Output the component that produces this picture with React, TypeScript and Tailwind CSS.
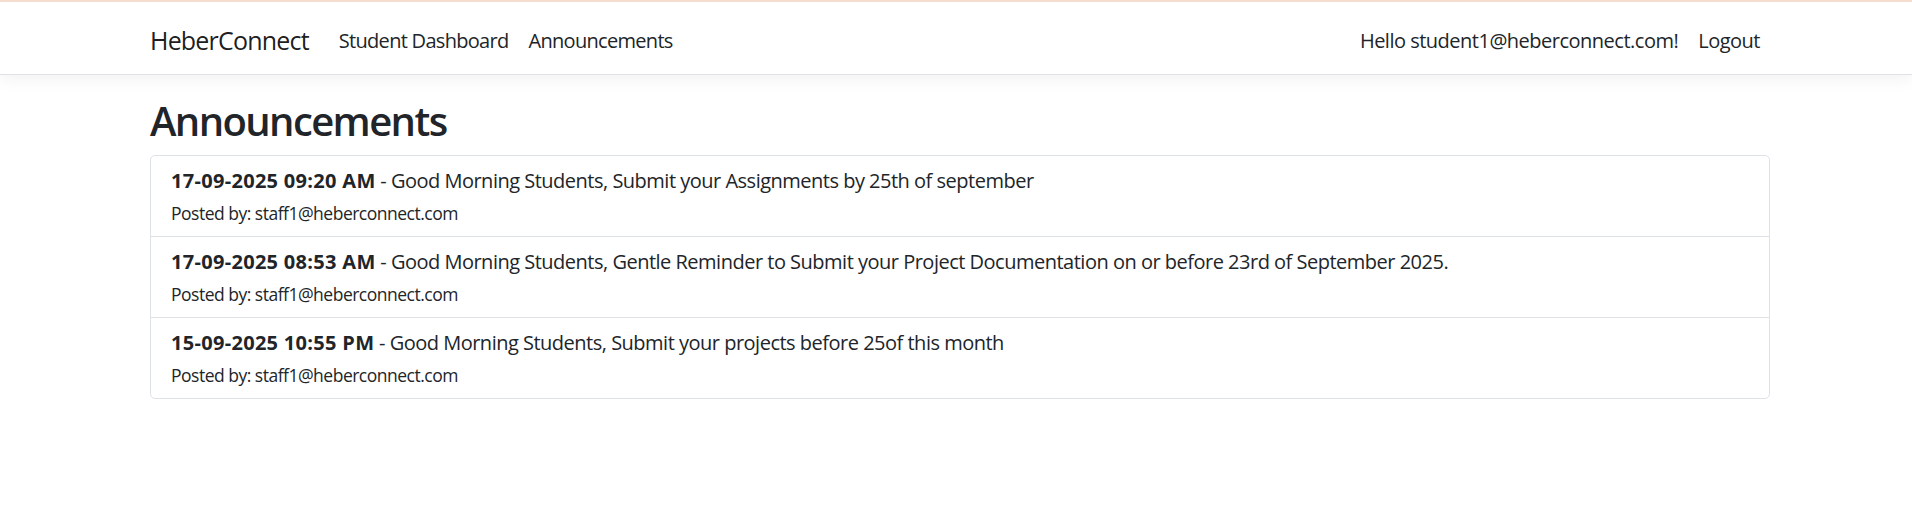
const announcements = [
  {
    date: "17-09-2025 09:20 AM",
    text: "Good Morning Students, Submit your Assignments by 25th of september",
    by: "staff1@heberconnect.com",
  },
  {
    date: "17-09-2025 08:53 AM",
    text: "Good Morning Students, Gentle Reminder to Submit your Project Documentation on or before 23rd of September 2025.",
    by: "staff1@heberconnect.com",
  },
  {
    date: "15-09-2025 10:55 PM",
    text: "Good Morning Students, Submit your projects before 25of this month",
    by: "staff1@heberconnect.com",
  },
];

export default function App() {
  return (
    <div className="min-h-[525px] bg-white text-[#212529] font-['Segoe_UI','Open_Sans',sans-serif] text-[20px] leading-[1.5] tracking-[-0.5px]">
      <header className="border-t-2 border-t-[#f6dccf] border-b border-b-[#dee2e6] bg-white shadow-[0_5px_15px_rgba(0,0,0,0.05)]">
        <nav className="ml-[150px] w-[1620px] h-[72px] pt-[5px] flex items-center">
          <a className="text-[25px] mr-[20px] tracking-[-0.8px] text-[rgba(0,0,0,0.9)]">HeberConnect</a>
          <ul className="flex tracking-[-0.7px]">
            <li className="px-[10px]">Student Dashboard</li>
            <li className="px-[10px]">Announcements</li>
          </ul>
          <ul className="flex ml-auto tracking-[-0.5px]">
            <li className="px-[10px]">Hello student1@heberconnect.com!</li>
            <li className="px-[10px]">Logout</li>
          </ul>
        </nav>
      </header>

      <main className="ml-[150px] w-[1620px] pt-[22px]">
        <h2 className="text-[40px] leading-[1.2] font-semibold tracking-[-1.6px] mb-[10px]">Announcements</h2>
        <ul className="border border-[#dee2e6] rounded-[5px]">
          {announcements.map((a, i) => (
            <li key={i} className={"px-[20px] py-[10px]" + (i > 0 ? " border-t border-[#dee2e6]" : "")}>
              <p className="mb-[4px]">
                <strong className="font-bold tracking-[0.3px]">{a.date}</strong> - {a.text}
              </p>
              <small className="block text-[17.5px] leading-[26px]">Posted by: {a.by}</small>
            </li>
          ))}
        </ul>
      </main>
    </div>
  );
}
